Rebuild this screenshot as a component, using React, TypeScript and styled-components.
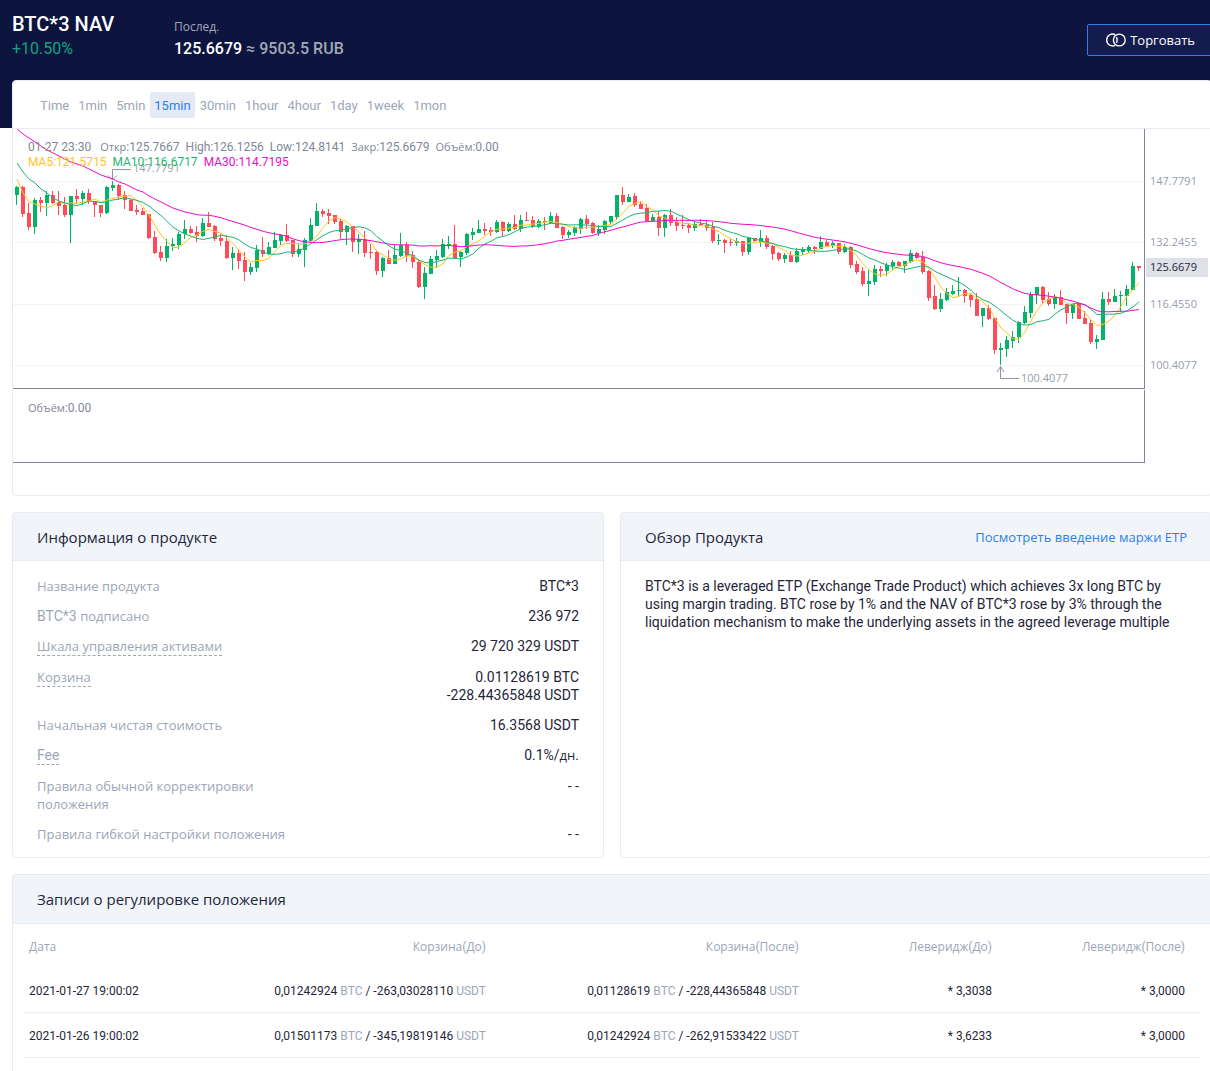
import React from "react";
import styled, { createGlobalStyle } from "styled-components";

const latin = `Roboto, "Open Sans", sans-serif`;
const cyrillic = `"Open Sans", "Noto Sans", sans-serif`;

const color = {
  navy: "#0d143e",
  ink: "#1f2639",
  muted: "#9ca6b8",
  line: "#e6eaf3",
  head: "#f1f5fa",
  blue: "#2f7fe6",
  up: "#03b468",
  down: "#ff4b57",
  ma5: "#ffc41f",
  ma10: "#1fb472",
  ma30: "#ee0cc8",
  axis: "#80869a",
};

const GlobalStyle = createGlobalStyle`
  *, *::before, *::after { box-sizing: border-box; }
  html { overflow-x: hidden; }
  body { margin: 0; background: #fff; color: ${color.ink}; font: 14px/18px ${latin}; overflow-x: hidden; }
  button { font: inherit; }
`;

/* ---------- text ---------- */

const Cyr = styled.span`
  font-family: ${cyrillic};
  font-size: ${(p: { $size?: number }) => (p.$size ? `${p.$size}px` : "inherit")};
`;

/** Sets Cyrillic runs in the humanist face and everything else in the base face. */
function Mixed({ text, size }: { text: string; size?: number }) {
  const parts = text.split(/([А-Яа-яЁё]+(?:\s+[А-Яа-яЁё]+)*)/);
  return (
    <>
      {parts.map((part, i) =>
        i % 2 ? (
          <Cyr key={i} $size={size}>
            {part}
          </Cyr>
        ) : (
          part
        )
      )}
    </>
  );
}

/* ---------- page ---------- */

const Page = styled.div`
  display: flex;
  flex-direction: column;
  min-height: 100vh;
  overflow: hidden;
  background: linear-gradient(${color.navy} 128px, #fff 128px);
`;

const Header = styled.header`
  display: flex;
  height: 80px;
  padding-left: 12px;
  margin-right: -2px;
`;

const Quote = styled.div`
  display: flex;
  flex-direction: column;
  gap: 1px;
  width: 162px;
  padding-top: 12px;
`;

const Title = styled.h1`
  margin: 0;
  font-size: 20px;
  font-weight: 500;
  line-height: 24px;
  color: #fff;
`;

const Change = styled.div`
  font-size: 16px;
  line-height: 24px;
  color: #12a480;
`;

const LastPrice = styled.div`
  flex: 1;
  padding-top: 17px;
  font-size: 16px;
  font-weight: 500;
  line-height: 24px;
  color: #a3a8b9;
`;

const Caption = styled.div`
  font-size: 12px;
  font-weight: 400;
  line-height: 20px;
`;

const Strong = styled.span`
  color: #fff;
`;

const TradeButton = styled.button`
  display: flex;
  align-items: center;
  gap: 4px;
  height: 32px;
  margin-top: 24px;
  padding: 0 16px 0 18px;
  border: 1px solid ${color.blue};
  border-radius: 2px;
  background: #131b4f;
  color: #fff;
  font-family: ${cyrillic};
  font-size: 13px;
`;

const Content = styled.main`
  display: flex;
  flex: 1;
  flex-direction: column;
  gap: 16px;
  margin: 0 -2px 0 12px;
`;

const Card = styled.section`
  border: 1px solid ${color.line};
  border-radius: 4px;
  background: #fff;
  overflow: hidden;
`;

/* ---------- chart ---------- */

const Periods = styled.nav`
  display: flex;
  align-items: center;
  gap: 1px;
  height: 48px;
  padding: 0 23px;
  border-bottom: 1px solid ${color.line};
`;

const Period = styled.button<{ $active: boolean }>`
  height: 26px;
  padding: 2px 4px 0;
  border: 0;
  border-radius: 2px;
  background: ${(p) => (p.$active ? "#e4ebf5" : "transparent")};
  color: ${(p) => (p.$active ? color.blue : color.muted)};
  font-size: 13px;
`;

const ChartBox = styled.div`
  position: relative;
`;

const ChartSvg = styled.svg`
  display: block;
  width: 100%;
  font-family: ${cyrillic};
  font-size: 11px;
`;

const Legend = styled.div<{ $top: number }>`
  position: absolute;
  top: ${(p) => p.$top}px;
  left: 15px;
  font-size: 12px;
  line-height: 15px;
  color: #7f8797;
`;

const LegendRow = styled.div`
  display: flex;
  align-items: baseline;
  gap: 6px;
`;

const Moment = styled.span`
  margin-right: 3px;
`;

const Average = styled.span<{ $color: string }>`
  color: ${(p) => p.$color};
`;

type Candle = [dir: 0 | 1, top: number, bottom: number, high: number, low: number];

// Candles in thirds of a pixel below each block's base line: 1 is rising, 0 is falling.
const blocks: { base: number; rows: Candle[] }[] = [
  {
    base: -4,
    rows: [
      [1,186,209,183,241],[0,186,266,184,277],[0,264,305,233,314],[1,226,305,220,328],[0,225,233,217,260],
      [1,210,233,198,274],[0,210,233,199,236],[0,232,242,199,271],[0,240,269,215,276],[1,214,269,212,355],
      [0,213,221,193,237],[1,205,221,197,241],[0,205,229,193,236],[0,229,241,227,277],[0,241,263,239,275],
      [1,187,264,184,268],[1,180,188,168,198],[0,181,212,178,224],[0,210,226,199,252],[0,224,257,222,259],
      [0,256,261,240,271],[0,259,269,250,270],[0,267,338,266,343],[0,337,383,318,386],[0,381,398,363,407],
      [1,364,398,341,411],[1,357,364,340,377],[1,328,360,322,371],[1,312,327,284,341],[0,313,323,302,328],
      [0,322,333,302,352],[1,295,332,278,335],[0,294,305,260,306],[0,304,341,301,347],[0,340,349,327,362],
      [0,348,398,330,401],[1,384,398,367,434],[0,383,407,373,431],[0,405,440,381,469],[1,427,440,415,451],
      [1,375,428,359,442],[0,376,386,335,396],[1,367,386,352,389],[1,346,368,320,370],[1,331,347,327,360],
      [0,331,348,298,350],[0,346,386,345,396],
    ],
  },
  {
    base: 41,
    rows: [
      [1,237,251,220,262],[1,210,239,204,291],[1,165,213,145,215],[1,123,168,100,168],[0,123,131,118,140],
      [0,129,138,118,161],[0,136,156,135,162],[0,153,185,147,208],[1,168,186,166,224],[0,168,216,167,245],
      [1,208,216,193,251],[0,206,248,184,260],[0,246,248,221,267],[0,246,303,244,315],[1,264,303,260,320],
      [0,264,282,240,283],[1,255,282,226,283],[1,226,258,190,262],[0,226,257,217,275],[0,255,276,244,293],
      [0,275,351,266,354],[1,309,351,292,386],[1,267,312,259,313],[1,258,270,240,292],[1,222,262,208,264],
      [1,223,226,199,238],[0,223,263,166,266],[1,246,262,244,290],[1,192,249,189,254],[1,186,195,175,210],
      [1,177,189,151,189],[0,177,184,160,196],[0,180,185,171,197],[1,156,186,151,189],[0,156,183,153,198],
      [1,162,183,157,187],[0,162,177,136,181],[1,150,177,136,185],[0,150,153,127,153],[0,150,168,139,175],
      [1,153,170,147,174],[0,153,157,142,179],[1,138,158,126,163],[0,138,173,129,175],[0,171,195,168,207],
      [1,186,195,180,203],[1,172,189,168,198],[1,147,176,144,192],[0,147,162,136,178],[0,159,189,157,193],
      [1,177,189,165,197],[1,153,180,150,191],[1,139,156,138,162],[1,75,141,74,149],[0,75,96,52,105],
      [1,81,96,72,97],[0,78,105,69,110],[0,102,117,94,118],[0,114,153,103,155],[1,141,153,133,155],
      [0,141,174,122,197],[1,135,174,132,200],[0,135,158,118,168],[0,156,168,142,182],[0,165,168,136,177],
      [0,165,174,163,190],[1,162,174,157,184],[0,162,165,148,168],[0,165,174,154,182],[0,171,213,157,218],
      [1,210,213,193,224],[0,210,219,207,249],[0,216,219,206,227],[1,213,219,205,227],[0,213,245,212,257],
      [1,204,245,201,254],[0,204,213,203,217],[1,204,216,180,231],[0,204,230,196,238],[0,228,251,225,269],
      [0,249,266,246,272],[1,255,266,250,278],[0,255,275,243,276],[1,243,275,235,278],[1,237,246,232,254],
      [1,231,242,225,248],[0,231,237,227,251],[1,216,236,199,237],[0,216,228,211,231],[1,219,228,212,234],
      [0,219,246,218,251],[1,232,246,223,250],[0,232,284,228,293],[0,282,305,272,312],[0,303,341,290,347],
    ],
  },
  {
    base: 81,
    rows: [
      [1,213,221,180,257],[1,178,215,166,225],[0,178,182,167,200],[1,166,182,158,199],[1,156,167,151,181],
      [0,156,167,152,169],[1,153,167,152,190],[1,129,155,120,160],[0,129,143,126,147],[0,140,185,124,191],
      [0,183,263,181,272],[0,258,296,226,299],[1,267,296,250,306],[1,246,269,234,272],[1,243,251,225,256],
      [1,241,244,202,259],[0,240,257,237,279],[0,255,269,252,291],[0,267,317,250,318],[1,294,317,294,350],
      [0,294,326,284,329],[0,324,419,323,431],[1,414,419,400,465],[1,390,416,377,442],[1,381,392,364,415],
      [1,336,382,334,398],[1,306,338,289,342],[1,252,308,247,324],[1,231,256,231,281],[0,231,269,229,279],
      [0,267,282,247,289],[1,261,281,252,298],[0,262,284,241,286],[0,282,308,281,341],[1,282,308,281,326],
      [0,282,326,280,328],[0,324,341,302,343],[0,339,395,329,402],[1,387,395,376,418],[1,267,389,247,391],
      [0,267,275,245,286],[1,258,275,238,276],[1,256,259,243,304],[1,237,257,226,287],[1,168,240,156,241],
      [0,168,173,167,182],
    ],
  },
];

const candles = blocks.flatMap(({ base, rows }) =>
  rows.map(([dir, ...ys]) => {
    const [top, bottom, high, low] = ys.map((y) => base + y / 3);
    return { up: dir === 1, top, bottom, high, low, close: dir === 1 ? top : bottom };
  })
);

// Averages at the left edge depend on candles before the window, so their start is given.
const lead: Record<number, number[]> = {
  5: [50, 64, 73, 75],
  10: [34, 43, 50, 54, 60, 64, 69, 72, 74],
  30: [0, 5, 9, 13, 17, 21, 24, 27, 30, 33, 35, 37, 40, 43, 46, 48, 50, 53, 55, 58, 61, 63, 67, 70, 73, 76, 79, 81, 83],
};

function average(period: number) {
  const points = candles.map((_, i) => {
    const y =
      i < period - 1
        ? lead[period][i]
        : candles.slice(i - period + 1, i + 1).reduce((sum, c) => sum + c.close, 0) / period;
    return `${4 + i * 6},${y.toFixed(1)}`;
  });
  return points.join(" ");
}

const gridLines: [number, string][] = [
  [52, "147.7791"],
  [113, "132.2455"],
  [175, "116.4550"],
  [236, "100.4077"],
];

function Chart() {
  return (
    <ChartSvg viewBox="0 0 1198 366" role="img" aria-label="BTC*3 NAV, 15min">
      <g shapeRendering="crispEdges">
        {gridLines.map(([y]) => (
          <rect key={y} x={0} y={y} width={1131} height={1} fill="#f3f4f6" />
        ))}
        <path d="M0 259.5H1131M0 333.5H1132M1131.5 0V260M1131.5 261V334" stroke={color.axis} fill="none" />
      </g>
      {gridLines.map(([y, label]) => (
        <text key={label} x={1137} y={y + 4} fill="#989eab">
          {label}
        </text>
      ))}
      <g fill="none" stroke="#8d94a3">
        <path d="M99.500 51V40.500H118M95 46.500L99.500 51L104 46.500" />
        <path d="M987.500 237V249.500H1006M984 243L987.500 237.500L991 243" />
      </g>
      <text x={120} y={43} fill="#989eab">147.7791</text>
      <text x={1008} y={253} fill="#989eab">100.4077</text>
      <g shapeRendering="crispEdges">
        {candles.map((c, i) => {
          const high = Math.round(c.high);
          const top = Math.round(c.top);
          return (
            <g key={i} fill={c.up ? color.up : color.down}>
              <rect x={3 + i * 6} y={high} width={1} height={Math.round(c.low) - high} />
              <rect x={2 + i * 6} y={top} width={4} height={Math.max(1, Math.round(c.bottom) - top)} />
            </g>
          );
        })}
      </g>
      <g fill="none" strokeWidth={1}>
        <polyline points={average(5)} stroke={color.ma5} />
        <polyline points={average(10)} stroke={color.ma10} />
        <polyline points={average(30)} stroke={color.ma30} />
      </g>
      <rect x={1133} y={129} width={62} height={19} fill="#dee1e7" />
      <text x={1137} y={142} fill={color.ink}>125.6679</text>
    </ChartSvg>
  );
}

/* ---------- panels ---------- */

const Panels = styled.div`
  display: grid;
  grid-template-columns: 1fr 1fr;
  gap: 16px;
`;

const PanelHead = styled.header<{ $tall?: boolean }>`
  display: flex;
  align-items: center;
  justify-content: space-between;
  height: ${(p) => (p.$tall ? 49 : 48)}px;
  padding: 0 24px;
  border-bottom: 1px solid ${color.line};
  background: ${color.head};
`;

const PanelTitle = styled.h2`
  margin: 0;
  font-family: ${cyrillic};
  font-size: 15px;
  font-weight: 400;
  line-height: 20px;
`;

const IntroLink = styled.a`
  color: ${color.blue};
  text-decoration: none;
  font-family: ${cyrillic};
  font-size: 13px;
`;

const Facts = styled.dl`
  margin: 0;
  padding: 16px 24px 2px;
`;

const Fact = styled.div`
  display: flex;
  justify-content: space-between;
  margin-bottom: 12px;
`;

const Term = styled.dt`
  max-width: 264px;
  color: ${color.muted};
`;

const Hint = styled.span`
  display: block;
  border-bottom: 1px dashed ${color.muted};
`;

const Value = styled.dd`
  margin: 0;
  text-align: right;
  white-space: pre-line;
`;

const Description = styled.p`
  margin: 0;
  padding: 16px 24px;
`;

const facts: { label: string; value: string; hint?: boolean }[] = [
  { label: "Название продукта", value: "BTC*3" },
  { label: "BTC*3 подписано", value: "236 972" },
  { label: "Шкала управления активами", value: "29 720 329 USDT", hint: true },
  { label: "Корзина", value: "0.01128619 BTC\n-228.44365848 USDT", hint: true },
  { label: "Начальная чистая стоимость", value: "16.3568 USDT" },
  { label: "Fee", value: "0.1%/дн.", hint: true },
  { label: "Правила обычной корректировки положения", value: "- -" },
  { label: "Правила гибкой настройки положения", value: "- -" },
];

/* ---------- records ---------- */

const RecordsCard = styled(Card)`
  flex: 1;
  border-bottom: 0;
  border-bottom-left-radius: 0;
  border-bottom-right-radius: 0;
`;

const TableWrap = styled.div`
  padding: 0 10px;
`;

const Table = styled.table`
  width: 100%;
  border-collapse: separate;
  border-spacing: 0;
  table-layout: fixed;
  font-size: 12px;
  line-height: 18px;
`;

const Th = styled.th<{ $first?: boolean; $width?: number }>`
  width: ${(p) => (p.$width ? `${p.$width}px` : "auto")};
  height: 44px;
  padding: 2px 16px 0 6px;
  color: ${color.muted};
  font-weight: 400;
  text-align: ${(p) => (p.$first ? "left" : "right")};
`;

const Td = styled.td<{ $first?: boolean }>`
  height: 45px;
  padding: 2px 16px 0 6px;
  border-bottom: 1px solid ${color.line};
  text-align: ${(p) => (p.$first ? "left" : "right")};
  white-space: nowrap;
`;

const Unit = styled.span`
  color: ${color.muted};
`;

function Basket({ btc, usdt }: { btc: string; usdt: string }) {
  return (
    <>
      {btc} <Unit>BTC</Unit> / {usdt} <Unit>USDT</Unit>
    </>
  );
}

const records = [
  { date: "2021-01-27 19:00:02", before: ["0,01242924", "-263,03028110"], after: ["0,01128619", "-228,44365848"], from: "3,3038", to: "3,0000" },
  { date: "2021-01-26 19:00:02", before: ["0,01501173", "-345,19819146"], after: ["0,01242924", "-262,91533422"], from: "3,6233", to: "3,0000" },
];

const periods = ["Time", "1min", "5min", "15min", "30min", "1hour", "4hour", "1day", "1week", "1mon"];

export default function App() {
  const [period, setPeriod] = React.useState("15min");
  return (
    <Page>
      <GlobalStyle />
      <Header>
        <Quote>
          <Title>BTC*3 NAV</Title>
          <Change>+10.50%</Change>
        </Quote>
        <LastPrice>
          <Caption><Mixed text="Послед." /></Caption>
          <Strong>125.6679</Strong> ≈ 9503.5 RUB
        </LastPrice>
        <TradeButton type="button">
          <svg width="20" height="14" viewBox="0 0 20 14" fill="none" stroke="#fff" strokeWidth="1.400" aria-hidden="true">
            <circle cx="13.300" cy="7" r="5.900" />
            <path d="M9.200 1.700A5.900 5.900 0 1 0 9.200 12.300M10.400 4.200A5.900 5.900 0 0 1 10.400 9.800" />
          </svg>
          Торговать
        </TradeButton>
      </Header>
      <Content>
        <Card>
          <Periods>
            {periods.map((name) => (
              <Period key={name} type="button" $active={name === period} onClick={() => setPeriod(name)}>
                {name}
              </Period>
            ))}
          </Periods>
          <ChartBox>
            <Chart />
            <Legend $top={10}>
              <LegendRow>
                <Moment>01-27 23:30</Moment>
                <span><Mixed text="Откр:125.7667" size={11} /></span>
                <span>High:126.1256</span>
                <span>Low:124.8141</span>
                <span><Mixed text="Закр:125.6679" size={11} /></span>
                <span><Mixed text="Объём:0.00" size={11} /></span>
              </LegendRow>
              <LegendRow>
                <Average $color={color.ma5}>MA5:121.5715</Average>
                <Average $color={color.ma10}>MA10:116.6717</Average>
                <Average $color={color.ma30}>MA30:114.7195</Average>
              </LegendRow>
            </Legend>
            <Legend $top={271}><Mixed text="Объём:0.00" size={11} /></Legend>
          </ChartBox>
        </Card>
        <Panels>
          <Card>
            <PanelHead>
              <PanelTitle>Информация о продукте</PanelTitle>
            </PanelHead>
            <Facts>
              {facts.map((f) => (
                <Fact key={f.label}>
                  <Term>
                    {f.hint ? <Hint><Mixed text={f.label} size={13} /></Hint> : <Mixed text={f.label} size={13} />}
                  </Term>
                  <Value><Mixed text={f.value} size={13} /></Value>
                </Fact>
              ))}
            </Facts>
          </Card>
          <Card>
            <PanelHead>
              <PanelTitle>Обзор Продукта</PanelTitle>
              <IntroLink href="#etp">Посмотреть введение маржи ETP</IntroLink>
            </PanelHead>
            <Description>
              BTC*3 is a leveraged ETP (Exchange Trade Product) which achieves 3x long BTC by using margin trading. BTC
              rose by 1% and the NAV of BTC*3 rose by 3% through the liquidation mechanism to make the underlying assets
              in the agreed leverage multiple
            </Description>
          </Card>
        </Panels>
        <RecordsCard>
          <PanelHead $tall>
            <PanelTitle>Записи о регулировке положения</PanelTitle>
          </PanelHead>
          <TableWrap>
            <Table>
              <thead>
                <tr>
                  <Th $first><Mixed text="Дата" /></Th>
                  <Th $width={313}><Mixed text="Корзина(До)" /></Th>
                  <Th $width={313}><Mixed text="Корзина(После)" /></Th>
                  <Th $width={193}><Mixed text="Леверидж(До)" /></Th>
                  <Th $width={193}><Mixed text="Леверидж(После)" /></Th>
                </tr>
              </thead>
              <tbody>
                {records.map((r) => (
                  <tr key={r.date}>
                    <Td $first>{r.date}</Td>
                    <Td><Basket btc={r.before[0]} usdt={r.before[1]} /></Td>
                    <Td><Basket btc={r.after[0]} usdt={r.after[1]} /></Td>
                    <Td>* {r.from}</Td>
                    <Td>* {r.to}</Td>
                  </tr>
                ))}
              </tbody>
            </Table>
          </TableWrap>
        </RecordsCard>
      </Content>
    </Page>
  );
}
